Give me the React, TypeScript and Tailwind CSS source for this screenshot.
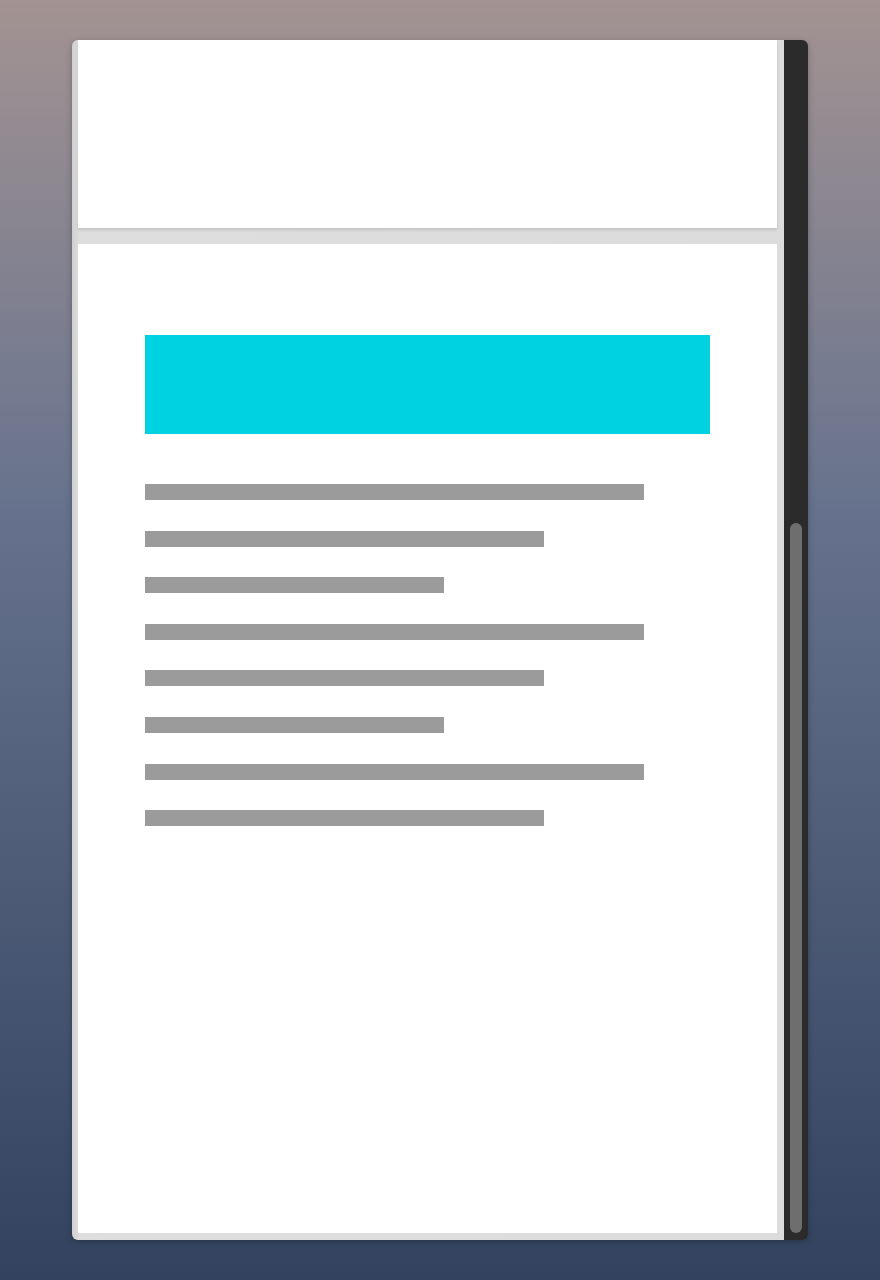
const bars = [499, 399, 299, 499, 399, 299, 499, 399];

export default function App() {
  return (
    <div className="h-[1280px] w-[880px] bg-gradient-to-b from-[#a39392] via-[#66728d] via-40% to-[#33435f] pl-[72px] pt-[40px]">
      <div className="flex h-[1200px] w-[736px] overflow-hidden rounded-[6px] shadow-[0_2px_6px_rgba(0,0,0,0.25)]">
        {/* page frame */}
        <div className="flex flex-1 flex-col bg-gradient-to-r from-[#cfcfcf] via-[#dedede] via-[1%] to-[#dcdcdc] pb-[7px] pl-[6px] pr-[7px]">
          <div className="relative z-10 h-[188px] bg-white shadow-[0_2px_3px_rgba(0,0,0,0.12)]" />
          <div className="mt-[16px] flex-1 bg-white px-[67px] pt-[91px]">
            <div className="h-[99px] w-[565px] bg-[#00d2e2]" />
            <div className="mt-[50px] flex flex-col gap-[30.6px]">
              {bars.map((w, i) => (
                <div key={i} className="h-[16px] bg-[#9b9b9b]" style={{ width: w }} />
              ))}
            </div>
          </div>
        </div>
        {/* scrollbar */}
        <div className="flex w-[24px] flex-col bg-[#2b2b2b] pb-[7px] pl-[6px] pr-[6px] pt-[483px]">
          <div className="flex-1 rounded-full bg-[#6e6e6e]" />
        </div>
      </div>
    </div>
  );
}
